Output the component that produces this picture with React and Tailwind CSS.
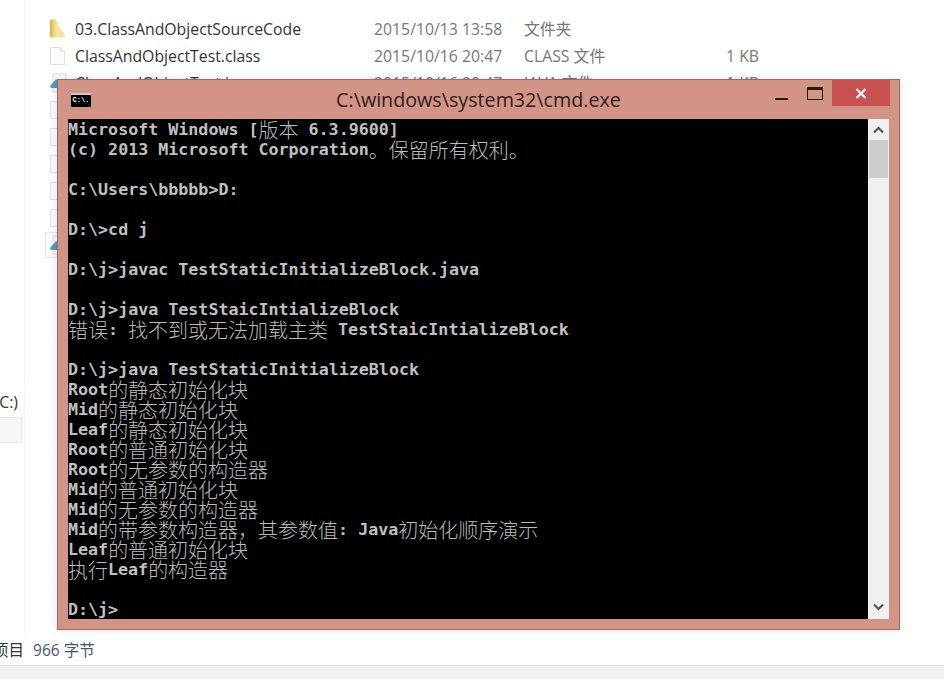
import React from 'react';

const files = [
  { icon: 'folder', name: '03.ClassAndObjectSourceCode', date: '2015/10/13 13:58', type: '文件夹', size: '' },
  { icon: 'file', name: 'ClassAndObjectTest.class', date: '2015/10/16 20:47', type: 'CLASS 文件', size: '1 KB' },
  { icon: 'java', name: 'ClassAndObjectTest.java', date: '2015/10/16 20:47', type: 'JAVA 文件', size: '1 KB' },
  { icon: 'file' },
  { icon: 'file' },
  { icon: 'file' },
  { icon: 'file' },
  { icon: 'file' },
  { icon: 'java', selected: true },
];

const lines = [
  'Microsoft Windows [版本 6.3.9600]',
  '(c) 2013 Microsoft Corporation。保留所有权利。',
  '',
  'C:\\Users\\bbbbb>D:',
  '',
  'D:\\>cd j',
  '',
  'D:\\j>javac TestStaticInitializeBlock.java',
  '',
  'D:\\j>java TestStaicIntializeBlock',
  '错误: 找不到或无法加载主类 TestStaicIntializeBlock',
  '',
  'D:\\j>java TestStaticInitializeBlock',
  'Root的静态初始化块',
  'Mid的静态初始化块',
  'Leaf的静态初始化块',
  'Root的普通初始化块',
  'Root的无参数的构造器',
  'Mid的普通初始化块',
  'Mid的无参数的构造器',
  'Mid的带参数构造器，其参数值: Java初始化顺序演示',
  'Leaf的普通初始化块',
  '执行Leaf的构造器',
  '',
  'D:\\j>',
];

const FileIcon = ({ type }) => {
  if (type === 'folder') {
    return (
      <svg width="17" height="20" viewBox="0 0 17 20">
        <defs>
          <linearGradient id="folderFill" x1="0" y1="0" x2="1" y2="0">
            <stop offset="0" stopColor="#d9ac3c" />
            <stop offset="0.45" stopColor="#f0d27a" />
            <stop offset="1" stopColor="#f8eab8" />
          </linearGradient>
        </defs>
        <path d="M1 1.5q0-1 1-1h5l2 3v15H2q-1 0-1-1z" fill="url(#folderFill)" />
        <path d="M9 6l7 10v2.500H9z" fill="#f6e3a2" />
      </svg>
    );
  }
  if (type === 'java') {
    return (
      <svg width="20" height="20" viewBox="0 0 20 20">
        <rect x="4" y="1" width="13" height="18" fill="#fafafa" stroke="#dcdcdc" />
        <path d="M1 13l6-7 4 3-3 6H2z" fill="#4f9bc9" />
      </svg>
    );
  }
  return (
    <svg width="17" height="20" viewBox="0 0 17 20">
      <path d="M1.500 1.500h10l4 4v13h-14z" fill="#fbfbfb" stroke="#e0e0e0" />
      <path d="M11.500 1.500v4h4" fill="#f2f2f2" stroke="#e0e0e0" />
    </svg>
  );
};

// latin goes in the 10px cell font, cjk in double width cells
const ConsoleLine = ({ text }) => {
  const parts = text.split(/([\u3000-\u9fff\uff00-\uffef]+)/);
  return (
    <div className="h-5 leading-5 whitespace-pre">
      {parts.map((part, i) =>
        i % 2 === 1 ? (
          <span key={i} className="inline-block align-top leading-5 text-[20px] font-light text-[#bcbcbc] font-['Noto_Sans_CJK_SC',sans-serif]">
            {part}
          </span>
        ) : (
          <span key={i} className="inline-block align-top leading-5">{part}</span>
        )
      )}
    </div>
  );
};

const Explorer = () => (
  <div className="flex flex-col h-full bg-white font-['Open_Sans','Noto_Sans_CJK_SC',sans-serif]">
    <div className="flex flex-1 min-h-0">
      <div className="w-[25px] shrink-0 border-r border-[#f3f3f3] pt-[392px]">
        <div className="flex justify-end overflow-hidden pr-[6px] text-[15.8px] leading-5 text-[#333] whitespace-nowrap">
          <span>(C:)</span>
        </div>
        <div className="h-[26px] mt-[5px] mr-[2px] bg-[#f7f7f7] border border-[#e6e6e6] border-l-0" />
      </div>
      <div className="flex-1 pt-[19px] flex flex-col gap-[7px]">
        {files.map((f, i) => (
          <div key={i} className="relative flex items-center h-5 text-[15.8px] leading-5">
            {f.selected && <div className="absolute left-[20px] top-[-3px] w-[40px] h-[26px] bg-[#fbfbfb] border border-[#e6e6e6]" />}
            <div className="relative w-[50px] pl-[24px] shrink-0 flex items-center">
              <FileIcon type={f.icon} />
            </div>
            <div className="w-[299px] shrink-0 text-[#333] whitespace-nowrap">{f.name}</div>
            <div className="w-[150px] shrink-0 text-[#777] whitespace-nowrap">{f.date}</div>
            <div className="w-[202px] shrink-0 text-[#777] whitespace-nowrap">{f.type}</div>
            <div className="text-[#777] whitespace-nowrap">{f.size}</div>
          </div>
        ))}
      </div>
    </div>
    <div className="h-[25px] shrink-0 flex items-center pt-[6px] text-[15.5px] text-[#4a5670] whitespace-nowrap overflow-hidden">
      <span className="ml-[-7px] text-[#333]">项目</span>
      <span className="ml-[9px]">966 字节</span>
    </div>
    <div className="h-[5px] shrink-0" />
    <div className="h-[14px] shrink-0 bg-[#f0f0f0] border-t border-[#dcdcdc]" />
  </div>
);

const ConsoleWindow = () => (
  <div className="absolute left-[57px] top-[79px] w-[843px] h-[551px] bg-[#d29486] border border-[#8f7068] shadow-[0_0_8px_rgba(0,0,0,0.12)] flex flex-col">
    <div className="relative h-[39px] shrink-0 flex justify-center items-center pt-[1px]">
      <div className="absolute left-[13px] top-[13px] w-5 h-[14px] bg-black border-t-2 border-[#c8c8d8] text-[7px] leading-[11px] text-white font-['Liberation_Mono',monospace] font-bold text-center">
        C:\.
      </div>
      <span className="text-[19.7px] leading-6 text-[#33201c] font-['Open_Sans',sans-serif]">C:\windows\system32\cmd.exe</span>
      <div className="absolute left-[717px] top-[18px] w-[13px] h-[2px] bg-[#2a1a16]" />
      <div className="absolute left-[749px] top-[7px] w-[16px] h-[13px] border border-[#2a1a16] border-t-[3px]" />
      <div className="absolute left-[774px] top-0 w-[58px] h-[26px] bg-[#c75050] flex items-center justify-center">
        <svg width="12" height="11" viewBox="0 0 12 11">
          <path d="M1.500 1l9 9M10.500 1l-9 9" stroke="#fff" strokeWidth="2.200" />
        </svg>
      </div>
    </div>
    <div className="flex h-[500px] ml-[10px] mr-[10px]">
      <div className="w-[800px] pt-[1px] bg-black text-[#c0c0c0] text-[16.67px] font-bold font-['DejaVu_Sans_Mono',monospace] overflow-hidden">
        {lines.map((l, i) => (
          <ConsoleLine key={i} text={l} />
        ))}
      </div>
      <div className="w-[21px] bg-[#f0f0f0] flex flex-col items-center">
        <div className="h-[21px] w-full flex items-center justify-center">
          <svg width="11" height="8" viewBox="0 0 11 8">
            <path d="M1 6.500l4.500-4.500 4.500 4.500" fill="none" stroke="#505050" strokeWidth="2" />
          </svg>
        </div>
        <div className="h-[38px] w-[19px] bg-[#cdcdcd]" />
        <div className="flex-1" />
        <div className="h-[24px] w-full flex items-center justify-center">
          <svg width="11" height="8" viewBox="0 0 11 8">
            <path d="M1 1.500l4.500 4.500 4.500-4.500" fill="none" stroke="#505050" strokeWidth="2" />
          </svg>
        </div>
      </div>
    </div>
  </div>
);

const App = () => (
  <div className="relative w-[944px] h-[679px] overflow-hidden">
    <Explorer />
    <ConsoleWindow />
  </div>
);

export default App;
